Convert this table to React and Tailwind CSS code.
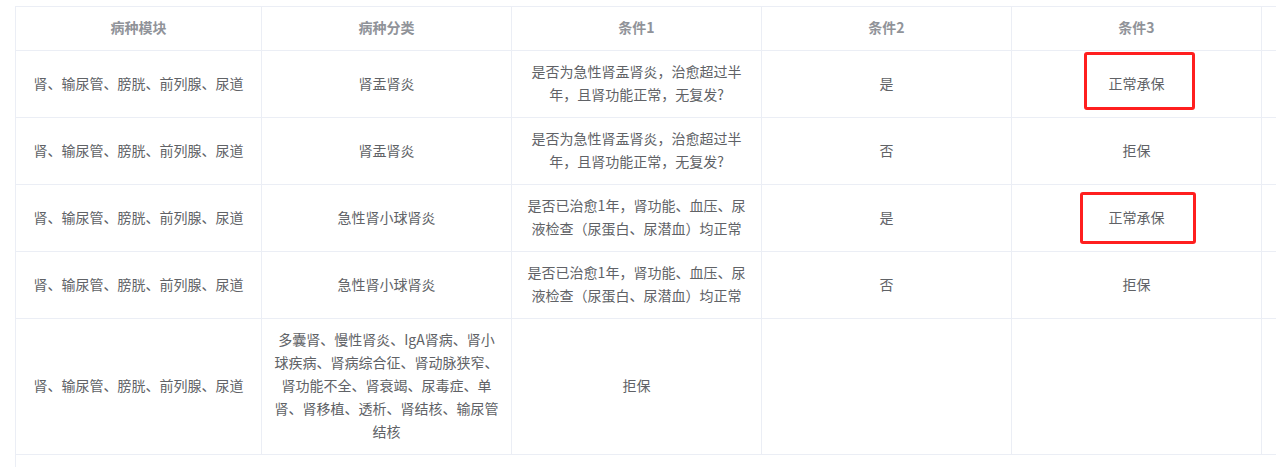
import React from 'react';

const headers = ['病种模块', '病种分类', '条件1', '条件2', '条件3', ''];

const module = '肾、输尿管、膀胱、前列腺、尿道';
const q1 = '是否为急性肾盂肾炎，治愈超过半年，且肾功能正常，无复发?';
const q2 = '是否已治愈1年，肾功能、血压、尿液检查（尿蛋白、尿潜血）均正常';

const rows = [
  { cells: [module, '肾盂肾炎', q1, '是', '正常承保', ''], mark: 'a' },
  { cells: [module, '肾盂肾炎', q1, '否', '拒保', ''] },
  { cells: [module, '急性肾小球肾炎', q2, '是', '正常承保', ''], mark: 'b' },
  { cells: [module, '急性肾小球肾炎', q2, '否', '拒保', ''] },
  {
    cells: [
      module,
      '多囊肾、慢性肾炎、IgA肾病、肾小球疾病、肾病综合征、肾动脉狭窄、肾功能不全、肾衰竭、尿毒症、单肾、肾移植、透析、肾结核、输尿管结核',
      '拒保',
      '',
      '',
      '',
    ],
  },
];

const Cell = ({ children, head, mark }) => (
  <div
    className={`relative flex items-center justify-center text-center px-[10px] py-[10px] leading-[23px] border-r border-b border-[#ebeef5] ${
      head ? 'font-bold text-[#909399]' : 'text-[#606266]'
    }`}
  >
    <div className="relative -top-[1px] w-full break-words">{children}</div>
    {mark === 'a' && (
      <div className="absolute left-[72px] top-[1px] w-[111px] h-[58px] border-[3px] border-[#ff1f1f] rounded-[3px]" />
    )}
    {mark === 'b' && (
      <div className="absolute left-[68px] top-[7px] w-[116px] h-[52px] border-[3px] border-[#ff1f1f] rounded-[3px]" />
    )}
  </div>
);

export default function App() {
  return (
    <div
      className="w-screen h-screen overflow-hidden bg-white pt-[6px] pl-[15px] text-[14px]"
      style={{ fontFamily: '"Noto Sans CJK SC", "Noto Sans", sans-serif' }}
    >
      <div className="h-full w-[1600px] border-l border-t border-[#ebeef5]">
        <div className="grid grid-cols-[246px_250px_250px_250px_250px_250px]">
          {headers.map((h, i) => (
            <Cell key={i} head>
              {h}
            </Cell>
          ))}
          {rows.map((r, ri) =>
            r.cells.map((c, ci) => (
              <Cell key={`${ri}-${ci}`} mark={ci === 4 ? r.mark : undefined}>
                {c}
              </Cell>
            ))
          )}
        </div>
      </div>
    </div>
  );
}
